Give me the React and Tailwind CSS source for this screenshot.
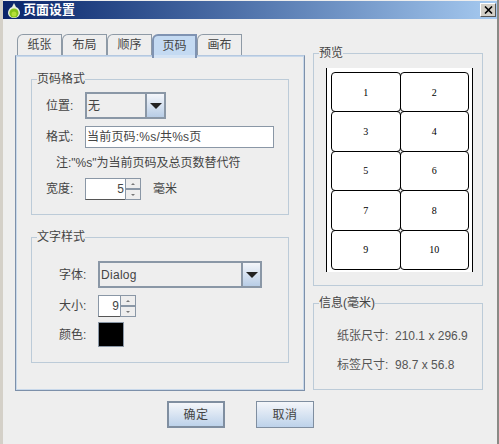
const font = { fontFamily: '"Liberation Sans","Noto Sans CJK SC",sans-serif' };

function Arrow() {
  return <div className="w-0 h-0 border-x-[6px] border-x-transparent border-t-[6px] border-t-[#222]" />;
}

function Combo({ value, width }) {
  return (
    <div className={`flex h-[27px] border-2 border-[#8a97a6] bg-[#eeeeee] ${width}`}>
      <div className="flex-1 flex items-center pl-[1px] text-[12px] text-[#444] tracking-[0.3px]">{value}</div>
      <div className="w-[19px] border-l-2 border-[#8a97a6] flex items-center justify-center bg-gradient-to-b from-[#f4f6fa] to-[#b8cde6]">
        <Arrow />
      </div>
    </div>
  );
}

function Spinner({ value, width }) {
  return (
    <div className={`flex h-[22px] ${width}`}>
      <div className="flex-1 bg-white border-l border-b border-t border-[#8a97a6] border-b-[#555] flex items-center justify-end pr-[1px] text-[12px] text-[#444]">{value}</div>
      <div className="w-[16px] flex flex-col border border-[#8a97a6]">
        <div className="flex-1 flex items-center justify-center bg-[#eeeeee] border-b-2 border-[#8a97a6]">
          <div className="w-0 h-0 border-x-[2px] border-x-transparent border-b-[2px] border-b-[#777]" />
        </div>
        <div className="flex-1 flex items-center justify-center bg-[#eeeeee]">
          <div className="w-0 h-0 border-x-[2px] border-x-transparent border-t-[2px] border-t-[#777]" />
        </div>
      </div>
    </div>
  );
}

function Group({ title, className, children }) {
  return (
    <fieldset className={`border border-[#bccbd8] m-0 p-0 min-w-0 ${className}`}>
      <legend className="ml-[5px] px-0 text-[12px] leading-[14px] text-[#444]">{title}</legend>
      {children}
    </fieldset>
  );
}

function Tab({ label, active }) {
  return (
    <div
      className={
        active
          ? "relative z-10 w-[45px] h-[24px] rounded-tl-[6px] border-2 border-b-0 border-[#7f93b2] bg-[#c4daf2] flex items-start justify-center text-[12px] text-[#444] pt-[1px] shadow-[inset_0_-3px_0_#d4e3f4]"
          : "w-[45px] h-[21px] rounded-tl-[6px] border border-b-0 border-[#8e9aa6] bg-[#eeeeee] flex items-center justify-center text-[12px] text-[#444] pb-[1px]"
      }
    >
      {label}
    </div>
  );
}

function Field({ label, children }) {
  return (
    <div className="flex items-center">
      <div className="w-[39px] text-[12px] text-[#444]">{label}</div>
      {children}
    </div>
  );
}

export default function App() {
  const cells = [1, 2, 3, 4, 5, 6, 7, 8, 9, 10];
  return (
    <div style={font} className="w-[499px] h-[444px] bg-[#eeeeee] overflow-hidden flex flex-col border-l-[3px] border-r-[2px] border-l-[#d4d0c8] border-r-[#8a8a86]">
      <div className="h-[18px] mt-[1px] shrink-0 flex items-center bg-gradient-to-r from-[#0a246a] to-[#a6caf0]">
        <svg width="14" height="17" viewBox="0 0 14 17" className="ml-[4px] shrink-0">
          <path d="M7 1 L9 5 C12 6 13 9 13 11 C13 14 10 16 7 16 C4 16 1 14 1 11 C1 9 2 6 5 5 Z" fill="#e6eedb" />
          <circle cx="7" cy="11" r="4.6" fill="#86c21a" />
          <circle cx="7" cy="12" r="2.5" fill="#b6e03a" />
        </svg>
        <div className="ml-[2px] text-[13px] font-bold text-white">页面设置</div>
        <div className="ml-auto mr-[1px] w-[16px] h-[14px] bg-[#d4d0c8] border border-[#555] border-l-white border-t-white flex items-center justify-center">
          <svg width="9" height="8" viewBox="0 0 9 8"><path d="M1 0.5 L8 7.5 M8 0.5 L1 7.5" stroke="#000" strokeWidth="1.6" /></svg>
        </div>
      </div>
      <div className="flex-1 flex pl-[12px]">
        <div className="w-[290px] flex flex-col pt-[15px]">
          <div className="flex pl-[2px] h-[21px]">
            <Tab label="纸张" />
            <Tab label="布局" />
            <Tab label="顺序" />
            <Tab label="页码" active />
            <Tab label="画布" />
          </div>
          <div className="h-[336px] border border-[#7d90aa] border-t-[#b4c8e0] shadow-[inset_0_0_0_1px_#c8d8ea] flex flex-col pl-[15px] pr-[15px] pt-[16px]">
            <Group title="页码格式" className="h-[143px]">
              <div className="flex flex-col pl-[14px] pt-[6px]">
                <Field label="位置:"><Combo value="无" width="w-[81px]" /></Field>
                <div className="mt-[7px]">
                  <Field label="格式:">
                    <div className="w-[189px] h-[22px] bg-white border border-[#8a97a6] flex items-center pl-[1px] text-[12px] text-[#444] tracking-[0.2px]">当前页码:%s/共%s页</div>
                  </Field>
                </div>
                <div className="mt-[6px] ml-[10px] h-[18px] flex items-center text-[12px] text-[#444] whitespace-nowrap">注:"%s"为当前页码及总页数替代符</div>
                <div className="mt-[6px]">
                  <Field label="宽度:">
                    <Spinner value="5" width="w-[56px]" />
                    <div className="ml-[12px] text-[12px] text-[#444]">毫米</div>
                  </Field>
                </div>
              </div>
            </Group>
            <Group title="文字样式" className="mt-[15px] h-[133px]">
              <div className="flex flex-col pl-[27px] pt-[17px]">
                <Field label="字体:"><Combo value="Dialog" width="w-[164px]" /></Field>
                <div className="mt-[7px]">
                  <Field label="大小:"><Spinner value="9" width="w-[38px]" /></Field>
                </div>
                <div className="mt-[5px]">
                  <Field label="颜色:"><div className="w-[26px] h-[25px] bg-black border border-[#8a97a6]" /></Field>
                </div>
              </div>
            </Group>
          </div>
          <div className="flex pl-[152px] pt-[10px]">
            <button className="w-[58px] h-[27px] shrink-0 border-[2px] border-[#7f8ea0] bg-gradient-to-b from-[#f4f6fa] to-[#bdd2ea] text-[12px] tracking-[0.5px] text-[#444]">确定</button>
            <button className="ml-[31px] w-[58px] h-[27px] shrink-0 border border-[#7f8ea0] bg-gradient-to-b from-[#f4f6fa] to-[#bdd2ea] text-[12px] tracking-[0.5px] text-[#444]">取消</button>
          </div>
        </div>
        <div className="ml-[8px] w-[170px] flex flex-col pt-[27px]">
          <Group title="预览" className="h-[240px]">
            <div className="ml-[12px] mt-[8px] w-[147px] h-[204px] bg-white border-x border-black px-[4px] pt-[4px]">
              <div className="grid grid-cols-2 grid-rows-5 h-[197px]">
                {cells.map((n) => (
                  <div key={n} className="border border-black rounded-[4px] -mr-[1px] -mb-[1px] flex items-center justify-center text-[10px] text-black [font-family:'Liberation_Serif',serif]">{n}</div>
                ))}
              </div>
            </div>
          </Group>
          <Group title="信息(毫米)" className="mt-[10px] h-[94px]">
            <div className="pl-[23px] pt-[18px] flex flex-col gap-[13px] text-[12px] text-[#555]">
              <div className="h-[16px] flex items-center whitespace-nowrap">纸张尺寸:&nbsp;&nbsp;<span>210.1 x 296.9</span></div>
              <div className="h-[16px] flex items-center whitespace-nowrap">标签尺寸:&nbsp;&nbsp;<span>98.7 x 56.8</span></div>
            </div>
          </Group>
        </div>
      </div>
    </div>
  );
}
